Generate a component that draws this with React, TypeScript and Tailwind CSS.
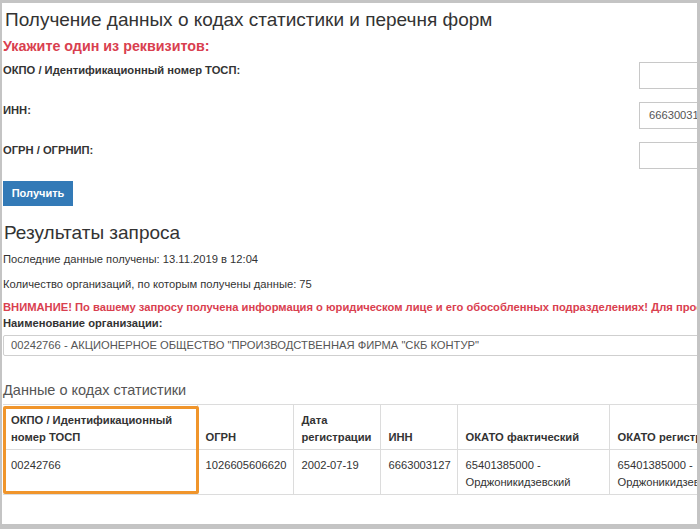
import React from 'react'

const font = { fontFamily: '"Liberation Sans", Arial, sans-serif' }

const fields = [
  { label: 'ОКПО / Идентификационный номер ТОСП:', value: '' },
  { label: 'ИНН:', value: '6663003127' },
  { label: 'ОГРН / ОГРНИП:', value: '' },
]

const columns = [
  { title: 'ОКПО / Идентификационный номер ТОСП', width: 'w-[194px]', value: '00242766' },
  { title: 'ОГРН', width: 'w-[96px]', value: '1026605606620' },
  { title: 'Дата регистрации', width: 'w-[87px]', value: '2002-07-19' },
  { title: 'ИНН', width: 'w-[77px]', value: '6663003127' },
  { title: 'ОКАТО фактический', width: 'w-[152px]', value: '65401385000 - Орджоникидзевский' },
  { title: 'ОКАТО регистрации', width: 'w-[152px]', value: '65401385000 - Орджоникидзевский' },
]

export default function App() {
  return (
    <div className="w-[700px] h-[529px] bg-[#c4c4c4] pt-[3px] pl-[2px]" style={font}>
      <div className="w-[695px] h-[521px] bg-white overflow-hidden relative text-[#333]">
        {/* Form */}
        <h1 className="text-[19px] leading-[24px] pl-[3px] pt-[5px] text-[#333]">
          Получение данных о кодах статистики и перечня форм
        </h1>
        <div className="text-[14.3px] leading-[18px] font-bold text-[#d9404f] pl-[1px] mt-[5px]">
          Укажите один из реквизитов:
        </div>

        <div className="mt-[7px] flex flex-col gap-[13px]">
          {fields.map((f) => (
            <div key={f.label} className="flex items-start justify-between">
              <span className="text-[11.2px] leading-[16px] font-bold pl-[1px]">{f.label}</span>
              <div className="w-[160px] h-[27px] -mr-[102px] border border-[#c8c8c8] flex items-center pl-[9px] text-[11.2px] text-[#555] shrink-0">
                {f.value}
              </div>
            </div>
          ))}
        </div>

        <button className="mt-[12px] ml-[1px] w-[70px] h-[25px] bg-[#337ab7] text-white text-[11px] font-bold">
          Получить
        </button>

        {/* Results */}
        <h2 className="text-[19px] leading-[24px] pl-[2px] mt-[15px] text-[#333]">Результаты запроса</h2>
        <div className="text-[11.2px] leading-[16px] pl-[1px] mt-[6px] flex flex-col gap-[9px]">
          <div>Последние данные получены: 13.11.2019 в 12:04</div>
          <div>Количество организаций, по которым получены данные: 75</div>
        </div>
        <div className="text-[11.2px] leading-[16px] pl-[1px] mt-[7px] font-bold whitespace-nowrap">
          <div className="text-[#d9404f]">
            ВНИМАНИЕ! По вашему запросу получена информация о юридическом лице и его обособленных подразделениях! Для просмотра выберите организацию
          </div>
          <div>Наименование организации:</div>
        </div>
        <div className="mt-[4px] ml-[1px] w-[720px] h-[21px] border border-[#cfcfcf] rounded-[2px] flex items-center pl-[7px] text-[11.2px] text-[#555]">
          00242766 - АКЦИОНЕРНОЕ ОБЩЕСТВО "ПРОИЗВОДСТВЕННАЯ ФИРМА "СКБ КОНТУР"
        </div>

        <h3 className="text-[14.5px] leading-[20px] text-[#555] pl-[1px] mt-[24px]">Данные о кодах статистики</h3>

        <div className="relative mt-[4px] ml-[1px]">
          <table className="border-collapse text-[11.2px] leading-[16.5px] w-[758px] table-fixed">
            <thead>
              <tr className="h-[45px]">
                {columns.map((c, i) => (
                  <th
                    key={c.title}
                    className={`${c.width} text-left align-bottom font-bold px-[8px] pb-[4px] border-t border-b border-[#dcdcdc] ${i > 0 ? 'border-l' : ''}`}
                  >
                    {c.title}
                  </th>
                ))}
              </tr>
            </thead>
            <tbody>
              <tr className="h-[45px]">
                {columns.map((c, i) => (
                  <td
                    key={c.title}
                    className={`text-left align-top px-[8px] pt-[7px] border-b border-[#dcdcdc] ${i > 0 ? 'border-l' : ''}`}
                  >
                    {c.value}
                  </td>
                ))}
              </tr>
            </tbody>
          </table>
          {/* highlight */}
          <div className="absolute left-0 top-[2px] w-[196px] h-[88px] border-[3px] border-[#f0952b] rounded-[2px] pointer-events-none" />
        </div>
      </div>
    </div>
  )
}
